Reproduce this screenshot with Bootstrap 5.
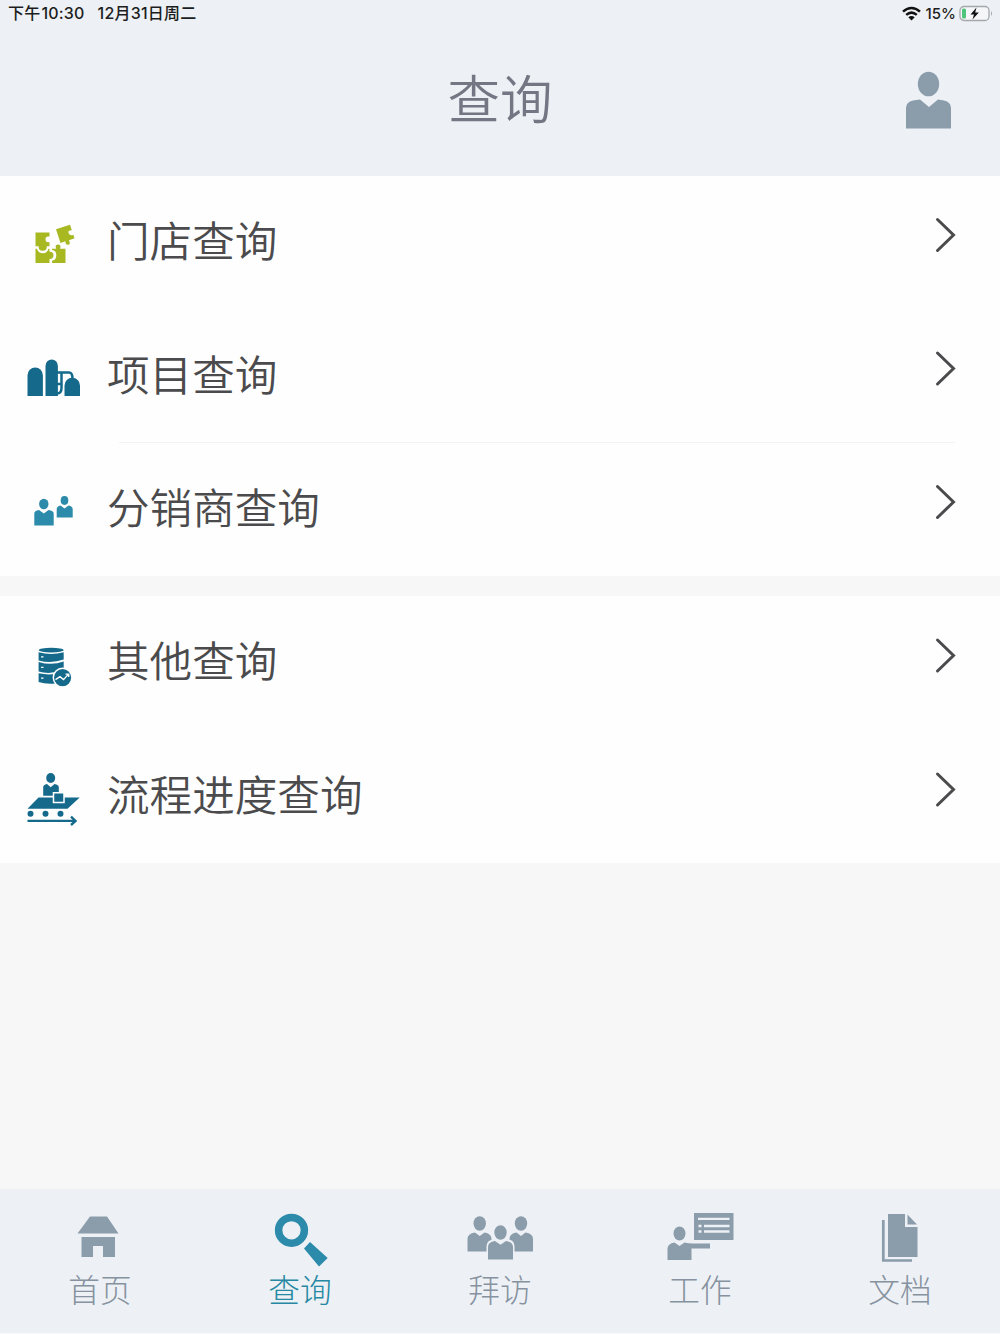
<!DOCTYPE html>
<html lang="zh-CN">
<head>
<meta charset="utf-8">
<meta name="viewport" content="width=device-width, initial-scale=1">
<title>查询</title>
<link href="https://cdn.jsdelivr.net/npm/bootstrap@5.3.0/dist/css/bootstrap.min.css" rel="stylesheet">
<style>
body{font-family:"Noto Sans CJK SC",sans-serif;background:#f7f7f8;color:#4b4b4d}
.screen{width:1000px;height:1334px}
.top-area{height:176px;background:#edf1f5}
.status{height:27px;font:500 15px/27px Inter,"Noto Sans CJK SC",sans-serif;color:#1c1d20;padding:0 6px 0 8px}
.clock{font-size:16px;letter-spacing:.2px}
.clock .day{margin-left:13px}
.clock .hour{margin-left:1px}
.charge{margin:0 3px 0 5px}
.title-bar{height:149px}
.title-bar h1{font-size:52.5px;line-height:80px;font-weight:350;color:#747783;margin:0;padding-top:29px}
.avatar{left:900px;top:40px}
.query-row{height:133.4px;border:0;padding:0 42px 0 24px;background:#fefefe;color:inherit}
.query-row .label{font-size:42.6px;line-height:64px;margin:-7px 0 0 23px;font-weight:350}
.chev{margin-top:-15px}
.query-list{--bs-list-group-border-radius:0}
.divided::after{content:"";position:absolute;left:119px;right:45px;bottom:0;height:1px;background:#f3f3f4}
.band{height:20px;background:#f7f7f8}
.tabs{height:145px;background:#edf1f5;border-bottom:1px solid #fafbfc}
.tabs .nav-link{padding:22px 0 0;color:#8792a0;font-size:31.7px;line-height:46px;font-weight:300}
.tabs .nav-link.active{color:#2688a3}
.tabs svg{display:block;margin:0 auto 4px}
.tabs .finder{margin:-2px auto -4px}
.gray{fill:#8b9cab}.navy{fill:#156a8c}.teal{fill:#2c8aaa}.lime{fill:#a7b820}
</style>
</head>
<body>
<div class="screen d-flex flex-column overflow-hidden">
<header class="top-area">
  <div class="status d-flex justify-content-between">
    <div class="clock d-flex"><span>下午</span><span class="hour">10:30</span><span class="day">12月31日周二</span></div>
    <div class="d-flex align-items-center">
      <svg width="19" height="15" viewBox="0 0 19 15" fill="none" stroke="#111" stroke-width="2.5"><path d="M1 5.6Q9.500-1.600 18 5.600M4.200 8.900Q9.500 4.400 14.800 8.900"/><path d="M6.300 11.200Q9.500 8.700 12.700 11.200L9.500 14.400Z" fill="#111" stroke="none"/></svg>
      <span class="charge">15%</span>
      <svg width="35" height="17" viewBox="0 0 35 17"><rect x="1" y="1.500" width="29" height="14" rx="4" fill="#f4f6f7" stroke="#a5a8aa" stroke-width="1.300"/><rect x="3" y="3.500" width="4" height="10" rx="1.500" fill="#4fc57b"/><path d="M17.500 2.500L11.500 9.500H15L13.500 14.500L19.800 7.400H16.200Z" fill="#111"/><path d="M32 6v5q2-2.500 0-5" fill="#a5a8aa"/></svg>
    </div>
  </div>
  <div class="title-bar position-relative text-center">
    <h1>查询</h1>
    <svg class="avatar position-absolute gray" width="56" height="66" viewBox="900 67 56 66"><ellipse cx="928.500" cy="84" rx="10.700" ry="12.300"/><path d="M906 128.500V108Q906 102 913 100.500L920 99.500L929 107L938 99.500L944 100.500Q951 102 951 108V128.500Z"/></svg>
  </div>
</header>
<main class="flex-grow-1">
  <div class="list-group list-group-flush query-list">
    <a class="list-group-item query-row d-flex align-items-center"><svg width="60" height="60" viewBox="24.500 212.700 60 60" class="lime"><path d="M36 232.300H50V236.300Q46 235.500 46 239T50 241.700V246H47.300Q47.500 250.500 43.200 250.500T39.200 246H36Z"/><path d="M36 248.500H37.400Q39 253 43.300 253T49 248.500H50V251.500Q54 251.200 54 255T50 258.700V262.700H36Z"/><path d="M52.500 248.500H56.800Q54.800 244.200 58.500 244.200T60.500 248.500H66V262.700H52.500V260.500Q56.800 260 56.800 255T52.500 249.800Z"/><path d="M56.500 229L70.500 224.500L72.300 230Q67.800 230 69.200 233T73.800 234.500L75 238L69.500 240Q71.500 244.500 68.500 244.500T66 241L61 242.800Z"/></svg><span class="label">门店查询</span><svg class="chev ms-auto" width="24" height="40" fill="none" stroke="#4b4b4d" stroke-width="3" stroke-linecap="round"><path d="M3.500 4.500L19.500 20L3.500 35.500"/></svg></a>
    <a class="list-group-item query-row divided d-flex align-items-center"><svg width="60" height="60" viewBox="24 346.100 60 60" class="navy"><path d="M27.500 396V375.500A7.700 8 0 0 1 42.900 375.500V396ZM45.500 396V366A6.200 6.500 0 0 1 57.900 366V396ZM64.500 396V385.500A7.700 7.500 0 0 1 80 385.500V396Z"/><path d="M57 372.500H69Q72.500 372.500 72.500 379M57 384H62M61.500 373V388Q61.500 393.500 57 393.500" fill="none" stroke="#156a8c" stroke-width="2.500"/></svg><span class="label">项目查询</span><svg class="chev ms-auto" width="24" height="40" fill="none" stroke="#4b4b4d" stroke-width="3" stroke-linecap="round"><path d="M3.500 4L19.500 19.500L3.500 35"/></svg></a>
    <a class="list-group-item query-row d-flex align-items-center"><svg width="60" height="60" viewBox="24 479.500 60 60" class="teal"><ellipse cx="43.800" cy="504.500" rx="4.700" ry="5.300"/><path d="M34.300 526V514Q34.300 511 39 510.500L43.800 514L48.500 510.500Q53.700 511 53.700 514V526Z"/><ellipse cx="64.500" cy="501" rx="3.800" ry="4.400"/><path d="M56.700 518V509.500Q57 506.500 60.500 506L64.500 509L68.500 506Q72.500 506.500 72.700 509.500V518Z"/></svg><span class="label">分销商查询</span><svg class="chev ms-auto" width="24" height="40" fill="none" stroke="#4b4b4d" stroke-width="3" stroke-linecap="round"><path d="M3.500 4.500L19.500 20L3.500 35.500"/></svg></a>
  </div>
  <div class="band"></div>
  <div class="list-group list-group-flush query-list">
    <a class="list-group-item query-row d-flex align-items-center"><svg width="60" height="60" viewBox="24 632.900 60 60" class="navy"><ellipse cx="51.200" cy="650" rx="12.500" ry="2.400"/><path d="M38.600 652.200Q51 655.800 63.700 652.200V659.500Q51 664 38.600 660.300ZM38.600 661.800Q51 665.800 63.700 661.500V669.500Q51 675 38.600 671.500ZM38.600 673.200Q47 675 55 674V683.500Q45 684.200 38.600 682Z"/><path d="M41 656.800H43.500M41 667.300H43.500M41 678H43.500" stroke="white" stroke-width="1.200"/><circle cx="62.600" cy="677.500" r="9.300" stroke="white" stroke-width="1.500"/><path d="M55.500 679.500L60 676.500L63.500 679.500L68.500 674M65.500 674H68.700V677" fill="none" stroke="white" stroke-width="1.400"/></svg><span class="label">其他查询</span><svg class="chev ms-auto" width="24" height="40" fill="none" stroke="#4b4b4d" stroke-width="3" stroke-linecap="round"><path d="M3.500 5L19.500 20.500L3.500 36"/></svg></a>
    <a class="list-group-item query-row d-flex align-items-center"><svg width="60" height="60" viewBox="24 766.300 60 60" class="navy"><ellipse cx="50.700" cy="778.300" rx="4.500" ry="5"/><path d="M43.200 796V787.500Q43.200 785 47 784.300L50.700 787.500L54.500 784.300Q58.800 785 58.800 787.500V796Z"/><path d="M38.500 797.700H79.700L67.500 809H27.500Z"/><path d="M53.500 793H64V802.800H53.500Z" stroke="white" stroke-width="1.500"/><circle cx="30.500" cy="814" r="3"/><circle cx="45.500" cy="814" r="3"/><circle cx="60.500" cy="814" r="3"/><path d="M27.500 821.200H74M71 817L75.500 821.200L71 825.300" fill="none" stroke="#156a8c" stroke-width="2.400"/></svg><span class="label">流程进度查询</span><svg class="chev ms-auto" width="24" height="40" fill="none" stroke="#4b4b4d" stroke-width="3" stroke-linecap="round"><path d="M3.500 5L19.500 20.500L3.500 36"/></svg></a>
  </div>
</main>
<nav class="nav nav-fill tabs flex-nowrap">
  <a class="nav-item nav-link w-25"><svg class="gray" width="70" height="50" viewBox="65 1211 70 50"><path d="M90 1216.500H107L118.500 1233.500H77.500ZM81.500 1237H115V1257H103V1246H93V1257H81.500Z"/></svg>首页</a>
  <a class="nav-item nav-link active w-25"><svg width="70" height="60" viewBox="265 1209 70 60" class="teal finder"><circle cx="291.500" cy="1230.300" r="12.900" fill="none" stroke="#2c8aaa" stroke-width="7.500"/><path d="M310 1242L327.700 1258L319 1266.500L304 1248.500Z"/></svg>查询</a>
  <a class="nav-item nav-link w-25"><svg width="70" height="50" viewBox="465 1211 70 50" class="gray"><ellipse cx="479.700" cy="1223.500" rx="6.200" ry="7.300"/><path d="M467.500 1251.500V1239Q467.500 1233.500 475 1232.500L479.700 1236L484.500 1232.500Q491.500 1233.500 491.500 1239V1251.500Z"/><ellipse cx="521" cy="1223.500" rx="6.200" ry="7.300"/><path d="M509.500 1251.500V1239Q509.500 1233.500 516.500 1232.500L521 1236L525.500 1232.500Q533 1233.500 533 1239V1251.500Z"/><path d="M486.500 1262V1246Q487 1239 495 1239.500H506Q514 1239 514.500 1246V1262Z" fill="#edf1f5"/><ellipse cx="500.500" cy="1232.500" rx="7" ry="8" stroke="#edf1f5" stroke-width="1.600"/><path d="M488 1259.500V1247Q488 1242 495 1241L500.500 1244.800L506 1241Q513 1242 513 1247V1259.500Z"/></svg>拜访</a>
  <a class="nav-item nav-link w-25"><svg width="70" height="50" viewBox="665 1211 70 50" class="gray"><path d="M694 1213H733.500V1240H694Z"/><path d="M698 1218.800H729.500M704 1226H729.500M704 1231.500H729.500M698.500 1226H701.500M698.500 1231.500H701.500" stroke="#edf1f5" stroke-width="2.300"/><ellipse cx="679.500" cy="1233.500" rx="6" ry="7"/><path d="M667.500 1260V1249Q667.500 1243.500 674.500 1242.500L679.500 1246L684.500 1242.500Q688 1243.500 693 1243.500H710V1248.500H691.500V1260Z"/></svg>工作</a>
  <a class="nav-item nav-link w-25"><svg width="70" height="50" viewBox="865 1211 70 50" class="gray overflow-visible"><path d="M888 1214H905V1227H917.500V1257H888ZM907.500 1214.500L917 1224.500H907.500Z"/><path d="M883.300 1220V1260.500H912" fill="none" stroke="#8b9cab" stroke-width="2.700"/></svg>文档</a>
</nav>
</div>
<script src="https://cdn.jsdelivr.net/npm/bootstrap@5.3.0/dist/js/bootstrap.bundle.min.js"></script>
</body>
</html>
